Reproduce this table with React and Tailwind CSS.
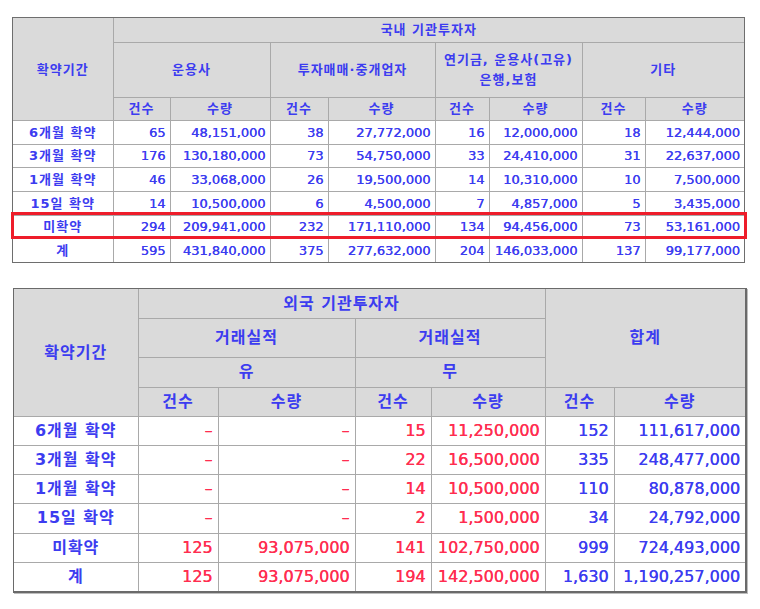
import React from "react";

const FONT = { fontFamily: '"DejaVu Sans", "Noto Sans CJK KR", sans-serif' };

const t1Rows = [
  ["6개월 확약", "65", "48,151,000", "38", "27,772,000", "16", "12,000,000", "18", "12,444,000"],
  ["3개월 확약", "176", "130,180,000", "73", "54,750,000", "33", "24,410,000", "31", "22,637,000"],
  ["1개월 확약", "46", "33,068,000", "26", "19,500,000", "14", "10,310,000", "10", "7,500,000"],
  ["15일 확약", "14", "10,500,000", "6", "4,500,000", "7", "4,857,000", "5", "3,435,000"],
  ["미확약", "294", "209,941,000", "232", "171,110,000", "134", "94,456,000", "73", "53,161,000"],
  ["계", "595", "431,840,000", "375", "277,632,000", "204", "146,033,000", "137", "99,177,000"],
];

const t2Rows = [
  ["6개월 확약", "–", "–", "15", "11,250,000", "152", "111,617,000"],
  ["3개월 확약", "–", "–", "22", "16,500,000", "335", "248,477,000"],
  ["1개월 확약", "–", "–", "14", "10,500,000", "110", "80,878,000"],
  ["15일 확약", "–", "–", "2", "1,500,000", "34", "24,792,000"],
  ["미확약", "125", "93,075,000", "141", "102,750,000", "999", "724,493,000"],
  ["계", "125", "93,075,000", "194", "142,500,000", "1,630", "1,190,257,000"],
];

const th = "bg-[#dadada] border border-[#a9a9a9] text-center font-bold text-[#3c3cf0] p-0 tracking-[1px]";
const lab = "border border-[#a9a9a9] text-center font-bold text-[#3c3cf0] p-0 tracking-[1px]";
const num = "border border-[#a9a9a9] text-right text-[#3c3cf0] p-0 pr-[4px] [text-shadow:0.35px_0_0_currentColor]";
const red = "border border-[#a9a9a9] text-right text-[#ff2d50] p-0 pr-[5px] [text-shadow:0.35px_0_0_currentColor]";

export default function App() {
  return (
    <div className="w-[760px] h-[609px] bg-white relative" style={FONT}>
      <div className="pt-[17px] pl-[12px]">
        <div className="w-[733px] border border-[#6e6e6e]">
          <table className="w-[731px] table-fixed border-collapse border-hidden text-[13px] leading-none">
            <colgroup>
              <col className="w-[100px]" />
              <col className="w-[57px]" />
              <col className="w-[100px]" />
              <col className="w-[58px]" />
              <col className="w-[107px]" />
              <col className="w-[54px]" />
              <col className="w-[93px]" />
              <col className="w-[63px]" />
              <col className="w-[99px]" />
            </colgroup>
            <thead>
              <tr className="h-[24px]">
                <th rowSpan={3} className={th}>확약기간</th>
                <th colSpan={8} className={th}>국내 기관투자자</th>
              </tr>
              <tr className="h-[55px]">
                <th colSpan={2} className={th}>운용사</th>
                <th colSpan={2} className={th}>투자매매·중개업자</th>
                <th colSpan={2} className={`${th} leading-[20px]`}>
                  연기금, 운용사(고유)
                  <br />
                  은행,보험
                </th>
                <th colSpan={2} className={th}>기타</th>
              </tr>
              <tr className="h-[23.5px]">
                {["건수", "수량", "건수", "수량", "건수", "수량", "건수", "수량"].map((t, i) => (
                  <th key={i} className={th}>{t}</th>
                ))}
              </tr>
            </thead>
            <tbody>
              {t1Rows.map((r, i) => (
                <tr key={i} className="h-[23.67px]">
                  <td className={lab}>{r[0]}</td>
                  {r.slice(1).map((v, j) => (
                    <td key={j} className={num}>{v}</td>
                  ))}
                </tr>
              ))}
            </tbody>
          </table>
        </div>
      </div>

      <div className="absolute left-[11px] top-[212px] w-[736px] h-[27px] border-[3px] border-[#ee1d2a] pointer-events-none" />

      <div className="pt-[25px] pl-[13px]">
        <div className="w-[734px] border border-[#6a6a6a] border-r-2 border-b-2 shadow-[1px_1px_0_#bdbdbd]">
          <table className="w-[731px] table-fixed border-collapse border-hidden text-[16px] leading-none">
            <colgroup>
              <col className="w-[124px]" />
              <col className="w-[80px]" />
              <col className="w-[137px]" />
              <col className="w-[76px]" />
              <col className="w-[114px]" />
              <col className="w-[69px]" />
              <col className="w-[131px]" />
            </colgroup>
            <thead>
              <tr className="h-[29px]">
                <th rowSpan={4} className={th}>확약기간</th>
                <th colSpan={4} className={th}>외국 기관투자자</th>
                <th colSpan={2} rowSpan={3} className={th}>합계</th>
              </tr>
              <tr className="h-[39px]">
                <th colSpan={2} className={th}>거래실적</th>
                <th colSpan={2} className={th}>거래실적</th>
              </tr>
              <tr className="h-[30px]">
                <th colSpan={2} className={th}>유</th>
                <th colSpan={2} className={th}>무</th>
              </tr>
              <tr className="h-[29px]">
                {["건수", "수량", "건수", "수량", "건수", "수량"].map((t, i) => (
                  <th key={i} className={th}>{t}</th>
                ))}
              </tr>
            </thead>
            <tbody>
              {t2Rows.map((r, i) => (
                <tr key={i} className="h-[29.17px]">
                  <td className={lab}>{r[0]}</td>
                  {r.slice(1, 5).map((v, j) => (
                    <td key={j} className={red}>{v}</td>
                  ))}
                  {r.slice(5).map((v, j) => (
                    <td key={j} className={`${num} pr-[5px]`}>{v}</td>
                  ))}
                </tr>
              ))}
            </tbody>
          </table>
        </div>
      </div>
    </div>
  );
}
